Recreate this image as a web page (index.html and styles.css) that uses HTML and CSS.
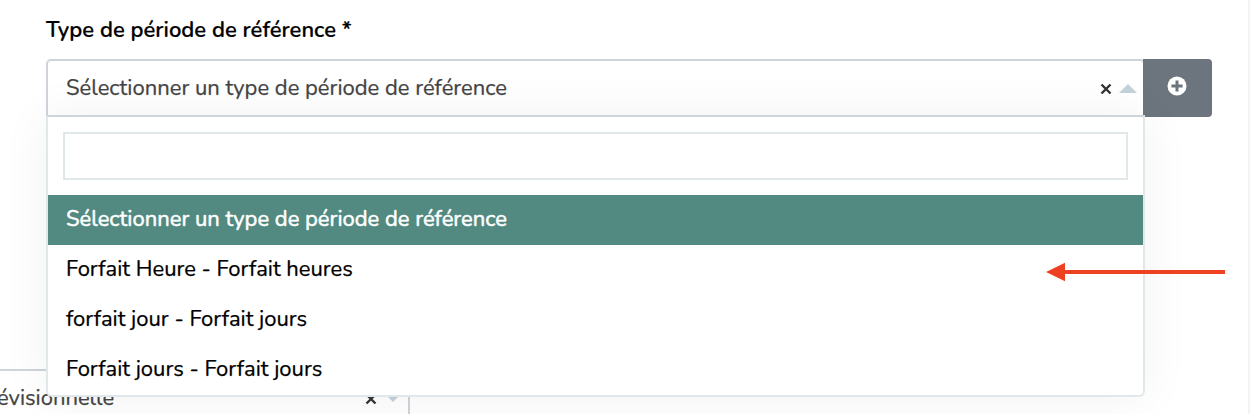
FILE: index.html
```html
<!DOCTYPE html>
<html lang="fr">
<head>
<meta charset="utf-8">
<title>Type de période de référence</title>
<link rel="stylesheet" href="styles.css">
</head>
<body>
<main class="panel">
  <label class="label">Type de période de référence *</label>
  <div class="group">
    <div class="select">
      <span>Sélectionner un type de période de référence</span>
      <svg class="clear" width="12" height="12" viewBox="0 0 12 12"><path d="M1.5 1.5l9 9M10.500 1.500l-9 9"/></svg>
      <svg class="caret" width="18" height="9" viewBox="0 0 18 9"><path d="M0 9L9 0l9 9z"/></svg>
    </div>
    <button class="add" aria-label="Ajouter">
      <svg width="20" height="20" viewBox="0 0 20 20"><circle cx="10" cy="10" r="9.500" fill="#fff"/><path d="M10 4.400v11.200M4.400 10h11.200" stroke="#6c757d" stroke-width="3"/></svg>
    </button>
    <div class="dropdown">
      <div class="search"></div>
      <ul class="options">
        <li class="option active">Sélectionner un type de période de référence</li>
        <li class="option">Forfait Heure - Forfait heures</li>
        <li class="option">forfait jour - Forfait jours</li>
        <li class="option">Forfait jours - Forfait jours</li>
      </ul>
    </div>
  </div>
  <div class="select lower">
    <span>évisionnelle</span>
    <svg class="clear" width="12" height="12" viewBox="0 0 12 12"><path d="M1.500 1.500l9 9M10.500 1.500l-9 9"/></svg>
    <svg class="caret" width="14" height="7" viewBox="0 0 14 7"><path d="M0 0h14L7 7z"/></svg>
  </div>
</main>
<svg class="arrow" width="180" height="20" viewBox="0 0 180 20"><path d="M0 10L19 .8V8h160v4H19v7.200z"/></svg>
</body>
</html>
```
FILE: styles.css
```css
* { box-sizing: border-box; }
body {
  margin: 0;
  height: 414px;
  overflow: hidden;
  position: relative;
  background: #fff;
  font-family: Nunito, Lato, sans-serif;
  font-size: 22px;
  color: #000;
}
.panel {
  height: 414px;
  padding: 15px 36px 0 46px;
  border-right: 2px solid #f3f3f3;
  overflow: hidden;
}
.label {
  display: block;
  height: 44px;
  line-height: 30px;
  font-weight: 600;
  white-space: nowrap;
  -webkit-text-stroke: .2px;
}
.group { display: flex; position: relative; width: 1166px; height: 58px; }
.select {
  display: flex;
  align-items: center;
  width: 1099px;
  height: 58px;
  padding: 0 6px 0 18px;
  border: 2px solid #ced4da;
  border-radius: 5px 5px 0 0;
  color: #444;
  white-space: nowrap;
  -webkit-text-stroke: .25px;
}
.clear { margin: 1px 0 0 auto; fill: none; stroke: #333; stroke-width: 2.4; }
.caret { margin-left: 7px; fill: #c3d1d9; }
.add {
  display: flex;
  align-items: center;
  justify-content: center;
  width: 69px;
  height: 58px;
  margin-left: -2px;
  padding: 0 1px 4px 0;
  border: 0;
  border-radius: 0 4px 4px 0;
  background: #6c757d;
}
.dropdown {
  position: absolute;
  top: 56px;
  left: 0;
  width: 1099px;
  height: 282px;
  padding-top: 15px;
  border: 2px solid #e1e8eb;
  border-top-color: #ced4da;
  border-radius: 0 0 6px 6px;
  background: #fff;
  box-shadow: 0 0 50px rgba(0, 0, 0, .06);
}
.search { height: 48px; margin: 0 15px 15px; border: 2px solid #e1e8eb; }
.options { margin: 0; padding: 0; list-style: none; }
.option {
  height: 50px;
  padding-left: 18px;
  line-height: 49px;
  white-space: nowrap;
  -webkit-text-stroke: .25px;
}
.active { background: #528a82; color: #fff; -webkit-text-stroke: .5px; }
.lower {
  width: 456px;
  margin: 252px 0 0 -92px;
  padding: 0 8px 0 41px;
}
.lower .caret { margin-left: 9px; }
.arrow { position: absolute; left: 1046px; top: 262px; fill: #ee4023; }
```
